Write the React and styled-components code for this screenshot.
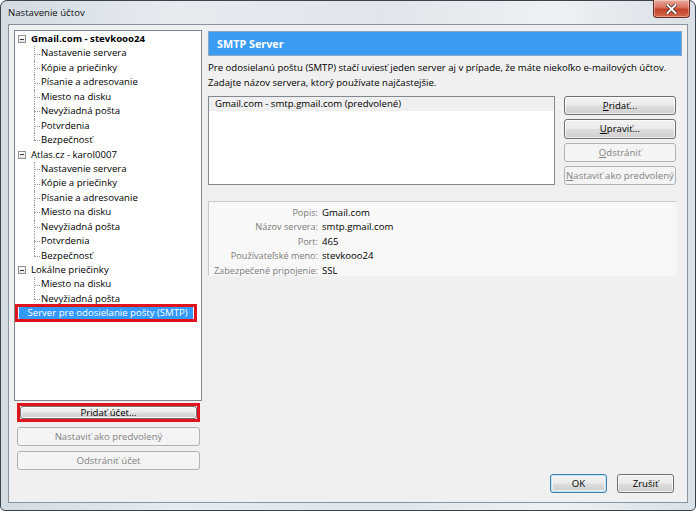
import React from 'react';
import styled, { createGlobalStyle, css } from 'styled-components';

const Global = createGlobalStyle`
  html, body { margin: 0; padding: 0; }
  body {
    width: 696px; height: 511px; overflow: hidden;
    font-family: "Open Sans", "Noto Sans", sans-serif;
    font-size: 9.6px;
    color: #000;
  }
  * { box-sizing: border-box; }
`;

const Window = styled.div`
  width: 696px;
  height: 511px;
  display: flex;
  flex-direction: column;
  border: 1px solid #39424d;
  border-radius: 7px 7px 5px 5px;
  background: linear-gradient(90deg, #d3dbe3 0%, #e6ebf0 25%, #dfe5eb 55%, #eef1f4 80%, #d9e0e7 100%);
  padding: 0 7px 7px 7px;
`;

const TitleBar = styled.div`
  height: 23px;
  display: flex;
  justify-content: space-between;
  align-items: flex-start;
`;

const Title = styled.div`
  padding-top: 5px;
  font-size: 9.6px;
  color: #111;
`;

const CloseButton = styled.div`
  width: 37px;
  height: 18px;
  margin-top: -1px;
  margin-right: -2px;
  border: 1px solid #6e2a20;
  border-top: none;
  border-radius: 0 0 4px 4px;
  background: linear-gradient(180deg, #e9a99a 0%, #d9725f 45%, #c3422a 55%, #d06a4c 100%);
  display: flex;
  align-items: center;
  justify-content: center;
  box-shadow: inset 0 0 0 1px rgba(255,255,255,0.35);
`;

const Client = styled.div`
  flex: 1;
  display: flex;
  gap: 6px;
  padding: 5px;
  background: #f0f0f0;
  border: 1px solid #8893a0;
`;

const LeftCol = styled.div`
  width: 188px;
  display: flex;
  flex-direction: column;
`;

const Tree = styled.div`
  height: 371px;
  background: #fff;
  border: 1px solid #828790;
  padding: 1px 0 0 0;
`;

const Row = styled.div`
  height: 14.45px;
  line-height: 14.45px;
  white-space: nowrap;
  display: flex;
  align-items: center;
  font-weight: ${p => (p.$bold ? 700 : 400)};
`;

const Expander = styled.span`
  width: 8px;
  height: 8px;
  margin: 0 5px 0 3px;
  border: 1px solid #919191;
  background: linear-gradient(180deg, #fff, #e4e4e4);
  position: relative;
  flex: none;
  &::after {
    content: "";
    position: absolute;
    left: 1px; right: 1px; top: 2.5px;
    height: 1px;
    background: #333;
  }
`;

const Children = styled.ul`
  list-style: none;
  margin: 0 0 0 19px;
  padding: 0;
`;

const Child = styled.li`
  position: relative;
  height: 14.45px;
  line-height: 14.45px;
  padding-left: 7px;
  white-space: nowrap;
  &::before {
    content: "";
    position: absolute;
    left: 0; top: 50%;
    width: 6px;
    border-top: 1px dotted #9a9a9a;
  }
  &::after {
    content: "";
    position: absolute;
    left: 0; top: 0;
    height: ${p => (p.$last ? '50%' : '100%')};
    border-left: 1px dotted #9a9a9a;
  }
`;

const Marked = styled.div`
  border: 3.5px solid #e0141e;
  ${p => p.$inset && css`margin: ${p.$inset};`}
`;

const SelectedRow = styled.div`
  height: 12px;
  line-height: 12px;
  background: #3399ff;
  color: #fff;
  padding-left: 9px;
  margin: 0 1px 0 0.5px;
  white-space: nowrap;
`;

const ButtonBase = styled.button`
  font-family: inherit;
  font-size: 9.6px;
  height: 19px;
  padding: 0;
  border-radius: 3px;
  border: 1px solid #707070;
  color: #000;
  background: linear-gradient(180deg, #f2f2f2 0%, #ebebeb 48%, #dddddd 52%, #cfcfcf 100%);
  box-shadow: inset 0 0 0 1px rgba(255,255,255,0.7);
  ${p => p.$disabled && css`
    border-color: #adb2b5;
    background: #f4f4f4;
    color: #838383;
    box-shadow: none;
  `}
  ${p => p.$default && css`
    border-color: #3c7fb1;
    box-shadow: inset 0 0 0 1px #c0e4f9, inset 0 0 0 2px rgba(255,255,255,0.5);
  `}
`;

const LeftButtons = styled.div`
  display: flex;
  flex-direction: column;
  gap: 5px;
  margin: 2px 2px 0 3px;
`;

const MarkedButton = styled(ButtonBase)`
  width: 100%;
  height: 13px;
  line-height: 11px;
  display: block;
`;

const WideButton = styled(ButtonBase)`
  width: 100%;
`;

const RightCol = styled.div`
  flex: 1;
  display: flex;
  flex-direction: column;
  padding-bottom: 4px;
`;

const Header = styled.div`
  margin-top: 1px;
  height: 25px;
  background: #3a9bf2;
  border: 1px solid #8ea7c0;
  color: #fff;
  font-weight: 700;
  font-size: 10.8px;
  display: flex;
  align-items: center;
  padding-left: 8px;
`;

const Desc = styled.p`
  margin: 5px 0 0 0;
  line-height: 14.5px;
`;

const ServerRow = styled.div`
  margin: 6px 6px 0 0;
  height: 89px;
  display: flex;
  gap: 9px;
`;

const ListBox = styled.div`
  width: 347px;
  background: #fff;
  border: 1px solid #828790;
`;

const ListItem = styled.div`
  height: 14px;
  line-height: 14px;
  padding-left: 6px;
  background: ${p => (p.$selected ? '#efefef' : 'transparent')};
`;

const SideButtons = styled.div`
  flex: 1;
  display: grid;
  grid-template-rows: repeat(4, 1fr);
  gap: 4px;
`;

const SideButton = styled(ButtonBase)`
  height: auto;
`;

const Details = styled.div`
  margin: 16px 5px 0 0;
  height: 75px;
  background: #f8f8f8;
  border: 1px solid #c9c9c9;
  border-right-color: #f4f4f4;
  border-bottom-color: #f4f4f4;
  padding-top: 3px;
  display: grid;
  grid-template-columns: 109px 1fr;
  grid-auto-rows: 14.5px;
  column-gap: 4px;
  align-items: center;
`;

const Label = styled.div`
  text-align: right;
  color: #7a7a7a;
  font-size: 9.15px;
  white-space: nowrap;
`;

const Value = styled.div`
  white-space: nowrap;
`;

const Footer = styled.div`
  margin-top: auto;
  display: flex;
  justify-content: flex-end;
  gap: 10px;
  padding-right: 8px;
`;

const DialogButton = styled(ButtonBase)`
  width: 57px;
`;

const Underline = styled.span`
  text-decoration: underline;
`;

const accounts = [
  {
    name: 'Gmail.com - stevkooo24',
    bold: true,
    children: ['Nastavenie servera', 'Kópie a priečinky', 'Písanie a adresovanie', 'Miesto na disku', 'Nevyžiadná pošta', 'Potvrdenia', 'Bezpečnosť'],
  },
  {
    name: 'Atlas.cz - karol0007',
    children: ['Nastavenie servera', 'Kópie a priečinky', 'Písanie a adresovanie', 'Miesto na disku', 'Nevyžiadná pošta', 'Potvrdenia', 'Bezpečnosť'],
  },
  {
    name: 'Lokálne priečinky',
    children: ['Miesto na disku', 'Nevyžiadná pošta'],
  },
];

const details = [
  ['Popis:', 'Gmail.com'],
  ['Názov servera:', 'smtp.gmail.com'],
  ['Port:', '465'],
  ['Používateľské meno:', 'stevkooo24'],
  ['Zabezpečené pripojenie:', 'SSL'],
];

function CloseIcon() {
  return (
    <svg width="11" height="10" viewBox="0 0 11 10">
      <path d="M1.5 1 L9.5 9 M9.5 1 L1.5 9" stroke="#3a1a14" strokeWidth="3.4" strokeLinecap="square" />
      <path d="M1.5 1 L9.5 9 M9.5 1 L1.5 9" stroke="#fff" strokeWidth="2" strokeLinecap="square" />
    </svg>
  );
}

export default function App() {
  return (
    <>
      <Global />
      <Window>
        <TitleBar>
          <Title>Nastavenie účtov</Title>
          <CloseButton><CloseIcon /></CloseButton>
        </TitleBar>
        <Client>
          <LeftCol>
            <Tree>
              {accounts.map(acc => (
                <div key={acc.name}>
                  <Row $bold={acc.bold}>
                    <Expander />
                    {acc.name}
                  </Row>
                  <Children>
                    {acc.children.map((c, i) => (
                      <Child key={c + i} $last={i === acc.children.length - 1}>{c}</Child>
                    ))}
                  </Children>
                </div>
              ))}
              <Marked $inset="-2px 4px 0 0">
                <SelectedRow>Server pre odosielanie pošty (SMTP)</SelectedRow>
              </Marked>
            </Tree>
            <LeftButtons>
              <Marked>
                <MarkedButton>Pridať účet...</MarkedButton>
              </Marked>
              <WideButton $disabled>Nastaviť ako predvolený</WideButton>
              <WideButton $disabled>Odstrániť účet</WideButton>
            </LeftButtons>
          </LeftCol>
          <RightCol>
            <Header>SMTP Server</Header>
            <Desc>
              Pre odosielanú poštu (SMTP) stačí uviesť jeden server aj v prípade, že máte niekoľko e-mailových účtov.
              <br />
              Zadajte názov servera, ktorý používate najčastejšie.
            </Desc>
            <ServerRow>
              <ListBox>
                <ListItem $selected>Gmail.com - smtp.gmail.com (predvolené)</ListItem>
              </ListBox>
              <SideButtons>
                <SideButton><Underline>P</Underline>ridať...</SideButton>
                <SideButton><Underline>U</Underline>praviť...</SideButton>
                <SideButton $disabled><Underline>O</Underline>dstrániť</SideButton>
                <SideButton $disabled><Underline>N</Underline>astaviť ako predvolený</SideButton>
              </SideButtons>
            </ServerRow>
            <Details>
              {details.map(([l, v]) => (
                <React.Fragment key={l}>
                  <Label>{l}</Label>
                  <Value>{v}</Value>
                </React.Fragment>
              ))}
            </Details>
            <Footer>
              <DialogButton $default>OK</DialogButton>
              <DialogButton>Zrušiť</DialogButton>
            </Footer>
          </RightCol>
        </Client>
      </Window>
    </>
  );
}
